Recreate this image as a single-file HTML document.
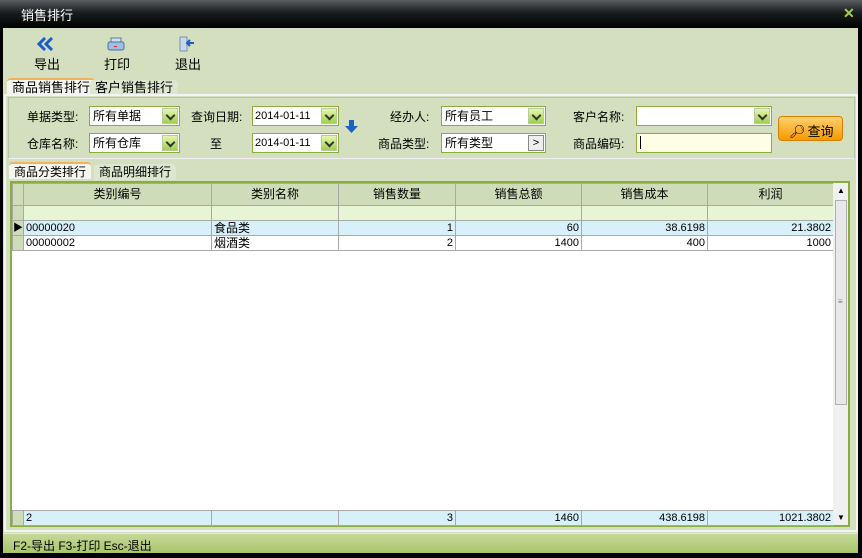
<!DOCTYPE html>
<html><head><meta charset="utf-8"><style>
*{margin:0;padding:0;box-sizing:border-box}
body{width:862px;height:558px;background:#000;position:relative;overflow:hidden;font-family:"Liberation Sans","Noto Sans CJK SC",sans-serif;font-size:12px;color:#000}
.a{position:absolute}
.title{left:0;top:0;width:862px;height:28px;background:linear-gradient(#5a5e60,#1a1d1f 45%,#000);color:#fff;font-size:13px;padding:5px 0 0 21px}
.body{left:3px;top:28px;width:855px;height:505px;background:#d3dfbf}
.lbl{font-size:12px}
.sel{background:#fff;border:1px solid #8aad3c;height:20px;font-size:12px;padding:2px 3px;line-height:14px}
.dd{position:absolute;right:1px;top:1px;width:16px;height:16px;background:linear-gradient(#e6f6b0,#9fd04a);border:1px solid #b8c8a0}
.dd:after{content:"";position:absolute;left:4px;top:3px;width:5px;height:5px;border-right:2px solid #333;border-bottom:2px solid #333;transform:rotate(45deg)}
.tab{height:16px;padding:1px 5px;font-size:12px;line-height:14px;background:#dde6cf;border-radius:4px 4px 0 0}
.tab.on{background:#f3f5ee;border-top:2px solid #f2b25a}
table{border-collapse:collapse;table-layout:fixed}
td{border:1px solid #a8a8a8;height:15px;padding:0 2px;font-size:11px;line-height:13px;white-space:nowrap;overflow:hidden}
td.r{text-align:right}
td.c{font-size:12px;line-height:13px}
</style></head><body>
<div class="a title">销售排行</div>
<div class="a" style="left:843px;top:5px;color:#a8d23c;font-weight:bold;font-size:14px">✕</div>
<div class="a body"></div>
<svg class="a" style="left:37px;top:37px" width="18" height="14"><path d="M8 1 L2 7 L8 13 M15 1 L9 7 L15 13" stroke="#1a5cc8" stroke-width="3" fill="none"/></svg>
<div class="a" style="left:34px;top:54px;font-size:13px">导出</div>
<svg class="a" style="left:107px;top:37px" width="18" height="15"><rect x="4" y="1" width="10" height="5" fill="#cfe0f0" stroke="#5a7ea0"/><rect x="1" y="5" width="16" height="8" rx="2" fill="#9ec0e0" stroke="#4a70a0"/><rect x="7" y="9" width="3" height="1" fill="#d33"/></svg>
<div class="a" style="left:104px;top:54px;font-size:13px">打印</div>
<svg class="a" style="left:178px;top:36px" width="18" height="16"><rect x="2" y="1" width="7" height="14" fill="#c8d8ea" stroke="#7a90b0"/><path d="M10 7 L16 7 M12 4 L9 7 L12 10" stroke="#1a5cc8" stroke-width="2" fill="none"/></svg>
<div class="a" style="left:175px;top:54px;font-size:13px">退出</div>
<div class="a tab on" style="left:7px;top:78px;height:17px;font-size:13px">商品销售排行</div>
<div class="a tab" style="left:90px;top:80px;font-size:13px">客户销售排行</div>
<div class="a" style="left:4px;top:94px;width:854px;height:438px;border:2px solid #f4f4f4"></div>
<div class="a" style="left:8px;top:97px;width:847px;height:62px;border:1px solid #b8c4a8;border-bottom:1px solid #f0f0f0"></div>
<div class="a lbl" style="left:27px;top:108px">单据类型:</div>
<div class="a sel" style="left:89px;top:106px;width:91px">所有单据<span class="dd"></span></div>
<div class="a lbl" style="left:27px;top:135px">仓库名称:</div>
<div class="a sel" style="left:89px;top:133px;width:91px">所有仓库<span class="dd"></span></div>
<div class="a lbl" style="left:191px;top:108px">查询日期:</div>
<div class="a sel" style="left:252px;top:106px;width:87px;font-size:11px;padding-left:2px">2014-01-11<span class="dd"></span></div>
<div class="a lbl" style="left:210px;top:135px">至</div>
<div class="a sel" style="left:252px;top:133px;width:87px;font-size:11px;padding-left:2px">2014-01-11<span class="dd"></span></div>
<svg class="a" style="left:345px;top:120px" width="13" height="14"><path d="M4 0 H9 V6 H13 L6.5 13 L0 6 H4Z" fill="#1a60c8"/></svg>
<div class="a lbl" style="left:390px;top:108px">经办人:</div>
<div class="a sel" style="left:441px;top:106px;width:105px">所有员工<span class="dd"></span></div>
<div class="a lbl" style="left:378px;top:135px">商品类型:</div>
<div class="a sel" style="left:441px;top:133px;width:105px">所有类型<span style="position:absolute;right:1px;top:1px;width:16px;height:16px;background:#eee;border:1px solid #888;font-size:11px;text-align:center;line-height:14px">&gt;</span></div>
<div class="a lbl" style="left:573px;top:108px">客户名称:</div>
<div class="a sel" style="left:636px;top:106px;width:136px"><span class="dd"></span></div>
<div class="a lbl" style="left:573px;top:135px">商品编码:</div>
<div class="a sel" style="left:636px;top:133px;width:136px;background:#fefee6"><span style="display:inline-block;width:1px;height:13px;background:#000"></span></div>
<div class="a" style="left:778px;top:116px;width:65px;height:25px;border-radius:4px;background:linear-gradient(#ffd070,#f59a00);border:1px solid #d88000;font-size:13px;padding:4px 0 0 10px">🔎︎<span style="margin-left:2px">查询</span></div>
<div class="a tab on" style="left:9px;top:162px;height:17px">商品分类排行</div>
<div class="a tab" style="left:94px;top:164px">商品明细排行</div>
<div class="a" style="left:10px;top:181px;width:840px;height:346px;border:2px solid #8aad3c;background:#fff"></div>
<table class="a" style="left:12px;top:183px;width:821px">
<colgroup><col style="width:11px"><col style="width:188px"><col style="width:127px"><col style="width:117px"><col style="width:126px"><col style="width:126px"><col style="width:126px"></colgroup>
<tr style="background:#cfdcba"><td style="height:22px"></td><td class="c" style="text-align:center">类别编号</td><td class="c" style="text-align:center">类别名称</td><td class="c" style="text-align:center">销售数量</td><td class="c" style="text-align:center">销售总额</td><td class="c" style="text-align:center">销售成本</td><td class="c" style="text-align:center">利润</td></tr>
<tr style="background:#e8f5d4"><td style="background:#cfdcba"></td><td></td><td></td><td></td><td></td><td></td><td></td></tr>
<tr style="background:#d8f0fa"><td style="background:#cfdcba;padding:0;font-size:10px">▶</td><td>00000020</td><td class="c">食品类</td><td class="r">1</td><td class="r">60</td><td class="r">38.6198</td><td class="r">21.3802</td></tr>
<tr><td style="background:#cfdcba"></td><td>00000002</td><td class="c">烟酒类</td><td class="r">2</td><td class="r">1400</td><td class="r">400</td><td class="r">1000</td></tr>
</table>
<table class="a" style="left:12px;top:510px;width:821px">
<colgroup><col style="width:11px"><col style="width:188px"><col style="width:127px"><col style="width:117px"><col style="width:126px"><col style="width:126px"><col style="width:126px"></colgroup>
<tr style="background:#d8f0fa"><td style="background:#cfdcba"></td><td>2</td><td></td><td class="r">3</td><td class="r">1460</td><td class="r">438.6198</td><td class="r">1021.3802</td></tr>
</table>
<div class="a" style="left:833px;top:183px;width:15px;height:342px;background:#f0f0f0"></div>
<div class="a" style="left:835px;top:200px;width:12px;height:205px;background:#e8e8e8;border:1px solid #b0b0b0"></div>
<div class="a" style="left:837px;top:186px;font-size:8px">▲</div>
<div class="a" style="left:837px;top:513px;font-size:8px">▼</div>
<div class="a" style="left:838px;top:297px;font-size:8px;color:#777">≡</div>
<div class="a" style="left:3px;top:533px;width:855px;height:20px;background:linear-gradient(#c6d99a,#a8c46a);border-top:1px solid #e0ecc0;font-size:12px;padding:3px 0 0 10px">F2-导出 F3-打印 Esc-退出</div>
</body></html>
